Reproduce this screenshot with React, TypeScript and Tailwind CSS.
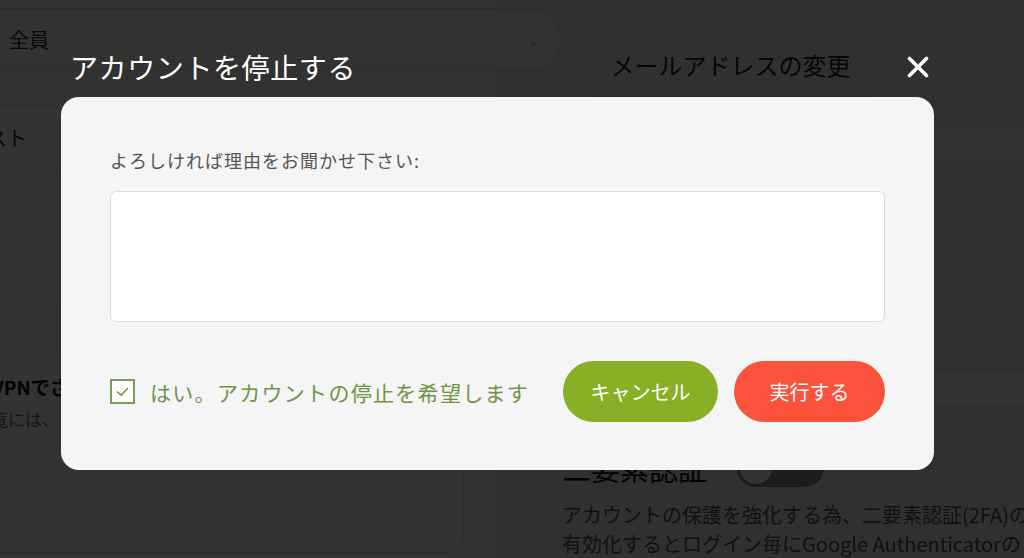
import { useState } from "react"

function CloseIcon() {
  return (
    <svg width="22" height="22" viewBox="0 0 22 22" fill="none">
      <path d="M2.5 2.5L19.5 19.5M19.5 2.5L2.5 19.5" stroke="white" strokeWidth="3.6" strokeLinecap="round" />
    </svg>
  )
}

function CheckIcon() {
  return (
    <svg width="13" height="10" viewBox="0 0 13 10" fill="none">
      <path d="M1.5 5L5 8.2L11.5 1.5" stroke="#6f9446" strokeWidth="1.6" strokeLinecap="round" strokeLinejoin="round" />
    </svg>
  )
}

export default function App() {
  const [agreed, setAgreed] = useState(true)

  return (
    <div className="relative h-[558px] w-[1024px] overflow-hidden bg-[#f0f0f0] font-['Noto_Sans_CJK_JP','Noto_Sans',sans-serif] text-[#333]">
      {/* Page behind the dialog */}
      <div className="flex h-full">
        {/* Left column */}
        <div className="flex w-[498px] shrink-0 flex-col border-r border-[#e4e4e4] bg-white">
          <div className="h-[9px] border-b border-[#e2e2e2]" />
          <div className="relative z-10 h-[63px]">
            <div className="-ml-[30px] flex h-[62px] w-[592px] items-center justify-between rounded-full border border-[#d8d8d8] bg-[#f7f7f7] pl-[38px] pr-[24px] text-[20px]">
              <span>全員</span>
              <span className="text-[10px] text-[#888]">⌄</span>
            </div>
          </div>
          <div className="h-[34px] border-b border-[#e2e2e2] bg-[#fafafa]" />
          <div className="flex h-[64px] items-center border-b border-[#e2e2e2] text-[20px]">
            <span className="-ml-[33px] whitespace-nowrap">リスト</span>
          </div>
          <div className="h-[138px] border-b border-[#e8e8e8]" />
          <div className="h-[39px] border-b border-[#e2e2e2] bg-[#fafafa]" />
          <div className="mr-[33px] flex h-[206px] flex-col rounded-br-2xl border-r border-b border-[#dcdcdc] pt-[26px]">
            <p className="-ml-[8px] whitespace-nowrap text-[19px] font-bold text-[#111]">VPNでさらに安全に</p>
            <p className="-ml-[26px] mt-[4px] whitespace-nowrap text-[17px] text-[#666]">閲覧には、</p>
          </div>
        </div>

        {/* Right column */}
        <div className="flex flex-1 flex-col">
          <div className="h-[130px] pl-[64px] pt-[33px]">
            <div className="flex h-[64px] w-[337px] items-center justify-center rounded-full border border-[#d6d6d6] bg-[#f0f0f0] text-[24px] text-[#222]">
              メールアドレスの変更
            </div>
          </div>
          <div className="h-[32px] bg-white" />
          <div className="h-[215px]" />
          <div className="h-[33px] bg-white" />
          <div className="flex flex-col pl-[64px] pt-[42px]">
            <div className="flex items-center gap-[30px]">
              <span className="text-[29px] leading-[40px] text-[#111]">二要素認証</span>
              <div className="flex h-[38px] w-[87px] items-center rounded-full bg-[#8c8c8c] px-[3px]">
                <div className="h-[32px] w-[32px] rounded-full bg-white" />
              </div>
            </div>
            <p className="mt-[12px] whitespace-nowrap text-[20px] leading-[29px] text-[#555]">
              アカウントの保護を強化する為、二要素認証(2FA)の設定を推奨します。
              <br />
              有効化するとログイン毎にGoogle Authenticatorのコードが必要です。
            </p>
          </div>
        </div>
      </div>

      {/* Dialog overlay */}
      <div className="absolute inset-0 z-20 bg-black/80">
        <div className="ml-[61px] w-[873px] pt-[47px]">
          <div className="flex h-[40px] items-center justify-between pl-[9px] pr-[4px]">
            <h2 className="text-[28px] leading-[40px] tracking-[0.6px] text-white">アカウントを停止する</h2>
            <button className="flex h-[24px] w-[24px] items-center justify-center">
              <CloseIcon />
            </button>
          </div>

          <div className="mt-[10px] rounded-[18px] bg-[#f5f5f5] px-[49px] pt-[51px] pb-[48px]">
            <label className="block text-[18px] leading-[24px] tracking-[1px] text-[#555]">
              よろしければ理由をお聞かせ下さい:
            </label>
            <textarea className="mt-[19px] block h-[131px] w-full resize-none rounded-[6px] border border-[#dcdcdc] bg-white p-3 text-[16px] outline-none" />

            <div className="mt-[39px] flex h-[61px] items-center justify-between">
              <label className="flex cursor-pointer items-center gap-[15px]" onClick={() => setAgreed(!agreed)}>
                <span className="flex h-[25px] w-[25px] items-center justify-center border-2 border-[#7a9c55] bg-white">
                  {agreed && <CheckIcon />}
                </span>
                <span className="text-[21px] leading-[30px] tracking-[1.3px] text-[#6f9446]">
                  はい。アカウントの停止を希望します
                </span>
              </label>
              <div className="flex gap-[16px]">
                <button className="flex h-[61px] w-[155px] items-center justify-center rounded-full bg-[#87b027] text-[20px] text-white">
                  キャンセル
                </button>
                <button className="flex h-[61px] w-[151px] items-center justify-center rounded-full bg-[#fb523c] text-[20px] text-white">
                  実行する
                </button>
              </div>
            </div>
          </div>
        </div>
      </div>
    </div>
  )
}
